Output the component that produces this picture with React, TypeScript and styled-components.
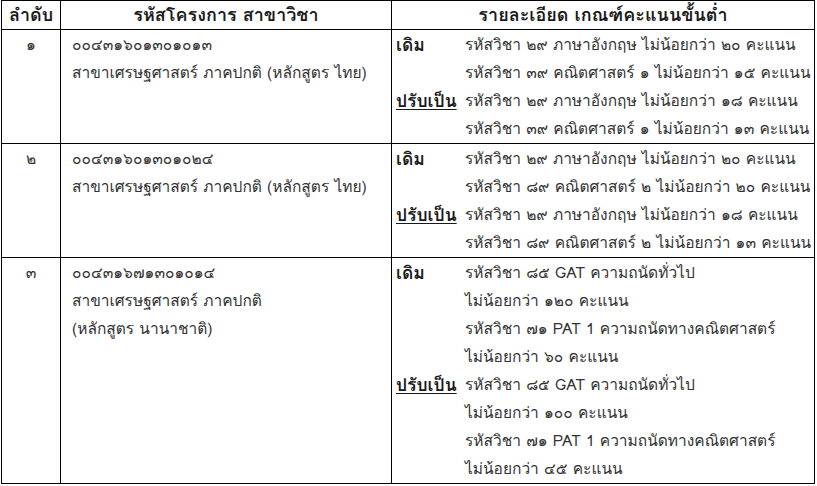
import React from "react";
import styled, { createGlobalStyle } from "styled-components";

const GlobalStyle = createGlobalStyle`
  html, body {
    margin: 0;
    padding: 0;
    background: #ffffff;
  }
  body {
    font-family: Waree, Tahoma, Loma, "Noto Sans Thai", "Noto Sans", "DejaVu Sans", sans-serif;
    color: #333333;
  }
`;

type Block = { label: string; underline?: boolean; lines: string[] };
type Row = { no: string; code: string; name: string[]; blocks: Block[] };

const rows: Row[] = [
  {
    no: "๑",
    code: "๐๐๔๓๑๖๐๑๓๐๑๐๑๓",
    name: ["สาขาเศรษฐศาสตร์ ภาคปกติ (หลักสูตร ไทย)"],
    blocks: [
      {
        label: "เดิม",
        lines: [
          "รหัสวิชา ๒๙ ภาษาอังกฤษ ไม่น้อยกว่า ๒๐ คะแนน",
          "รหัสวิชา ๓๙ คณิตศาสตร์ ๑ ไม่น้อยกว่า ๑๕ คะแนน",
        ],
      },
      {
        label: "ปรับเป็น",
        underline: true,
        lines: [
          "รหัสวิชา ๒๙ ภาษาอังกฤษ ไม่น้อยกว่า ๑๘ คะแนน",
          "รหัสวิชา ๓๙ คณิตศาสตร์ ๑ ไม่น้อยกว่า ๑๓ คะแนน",
        ],
      },
    ],
  },
  {
    no: "๒",
    code: "๐๐๔๓๑๖๐๑๓๐๑๐๒๔",
    name: ["สาขาเศรษฐศาสตร์ ภาคปกติ (หลักสูตร ไทย)"],
    blocks: [
      {
        label: "เดิม",
        lines: [
          "รหัสวิชา ๒๙ ภาษาอังกฤษ ไม่น้อยกว่า ๒๐ คะแนน",
          "รหัสวิชา ๘๙ คณิตศาสตร์ ๒ ไม่น้อยกว่า ๒๐ คะแนน",
        ],
      },
      {
        label: "ปรับเป็น",
        underline: true,
        lines: [
          "รหัสวิชา ๒๙ ภาษาอังกฤษ ไม่น้อยกว่า ๑๘ คะแนน",
          "รหัสวิชา ๘๙ คณิตศาสตร์ ๒ ไม่น้อยกว่า ๑๓ คะแนน",
        ],
      },
    ],
  },
  {
    no: "๓",
    code: "๐๐๔๓๑๖๗๑๓๐๑๐๑๔",
    name: ["สาขาเศรษฐศาสตร์ ภาคปกติ", "(หลักสูตร นานาชาติ)"],
    blocks: [
      {
        label: "เดิม",
        lines: [
          "รหัสวิชา ๘๕ GAT ความถนัดทั่วไป",
          "ไม่น้อยกว่า ๑๒๐ คะแนน",
          "รหัสวิชา ๗๑ PAT 1 ความถนัดทางคณิตศาสตร์",
          "ไม่น้อยกว่า ๖๐ คะแนน",
        ],
      },
      {
        label: "ปรับเป็น",
        underline: true,
        lines: [
          "รหัสวิชา ๘๕ GAT ความถนัดทั่วไป",
          "ไม่น้อยกว่า ๑๐๐ คะแนน",
          "รหัสวิชา ๗๑ PAT 1 ความถนัดทางคณิตศาสตร์",
          "ไม่น้อยกว่า ๔๕ คะแนน",
        ],
      },
    ],
  },
];

const App = () => {
  return (
    <>
      <GlobalStyle />
      <SPage>
        <STable>
          <colgroup>
            <col style={{ width: 59 }} />
            <col style={{ width: 331 }} />
            <col style={{ width: 423 }} />
          </colgroup>
          <thead>
            <tr>
              <SHead>ลำดับ</SHead>
              <SHead>รหัสโครงการ สาขาวิชา</SHead>
              <SHead>รายละเอียด เกณฑ์คะแนนขั้นต่ำ</SHead>
            </tr>
          </thead>
          <tbody>
            {rows.map((row) => (
              <tr key={row.no}>
                <SNoCell>{row.no}</SNoCell>
                <SCell>
                  <SLine>{row.code}</SLine>
                  {row.name.map((n) => (
                    <SLine key={n}>{n}</SLine>
                  ))}
                </SCell>
                <SDetailCell>
                  <SDetail>
                    {row.blocks.map((b) => (
                      <React.Fragment key={b.label}>
                        <SLabel $underline={b.underline}>{b.label}</SLabel>
                        <SLines>
                          {b.lines.map((l, i) => (
                            <SLine key={i}>{l}</SLine>
                          ))}
                        </SLines>
                      </React.Fragment>
                    ))}
                  </SDetail>
                </SDetailCell>
              </tr>
            ))}
          </tbody>
        </STable>
      </SPage>
    </>
  );
};

const SPage = styled.div`
  padding: 0 0 0 1px;
`;

const STable = styled.table`
  border-collapse: collapse;
  table-layout: fixed;
  width: 814px;
  font-size: 15.5px;
  line-height: 28px;
`;

const SHead = styled.th`
  border: 1px solid #000;
  height: 28px;
  padding: 0;
  font-size: 18px;
  font-weight: 700;
  text-align: center;
  vertical-align: middle;
  color: #1a1a1a;
`;

const SCell = styled.td`
  border: 1px solid #000;
  padding: 1px 0 0 11px;
  vertical-align: top;
`;

const SNoCell = styled(SCell)`
  padding-left: 0;
  text-align: center;
`;

const SDetailCell = styled(SCell)`
  padding-left: 4px;
`;

const SDetail = styled.div`
  display: grid;
  grid-template-columns: 69px 1fr;
`;

const SLabel = styled.div<{ $underline?: boolean }>`
  font-size: 17.5px;
  font-weight: 700;
  color: #1a1a1a;
  text-decoration: ${(p) => (p.$underline ? "underline" : "none")};
  text-underline-offset: 2px;
  line-height: 28px;
`;

const SLines = styled.div`
  display: flex;
  flex-direction: column;
`;

const SLine = styled.div`
  white-space: nowrap;
  line-height: 28px;
`;

export default App;
